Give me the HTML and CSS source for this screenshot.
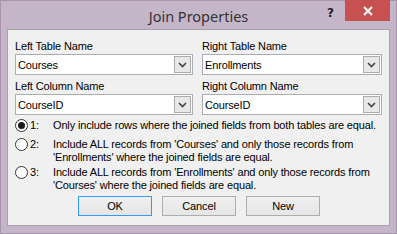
FILE: index.html
```html
<!DOCTYPE html>
<html>
<head>
<meta charset="utf-8">
<link rel="stylesheet" href="styles.css">
</head>
<body>
<div class="window">
  <div class="titlebar">
    <div></div>
    <div class="title">Join Properties</div>
    <div class="controls">
      <span class="help">?</span>
      <span class="close">
        <svg width="10" height="10" viewBox="0 0 10 10"><path d="M1 1 L9 9 M9 1 L1 9" stroke="#fff" stroke-width="2"/></svg>
      </span>
    </div>
  </div>
  <div class="panel">
    <div class="fields">
      <div class="field">
        <div class="label">Left Table Name</div>
        <div class="combo"><span class="value">Courses</span><span class="drop"><svg width="9" height="6" viewBox="0 0 9 6"><path d="M1 1 L4.5 4.5 L8 1" stroke="#444" stroke-width="1.6" fill="none"/></svg></span></div>
      </div>
      <div class="field">
        <div class="label">Right Table Name</div>
        <div class="combo"><span class="value">Enrollments</span><span class="drop"><svg width="9" height="6" viewBox="0 0 9 6"><path d="M1 1 L4.5 4.5 L8 1" stroke="#444" stroke-width="1.6" fill="none"/></svg></span></div>
      </div>
      <div class="field">
        <div class="label">Left Column Name</div>
        <div class="combo"><span class="value">CourseID</span><span class="drop"><svg width="9" height="6" viewBox="0 0 9 6"><path d="M1 1 L4.5 4.5 L8 1" stroke="#444" stroke-width="1.6" fill="none"/></svg></span></div>
      </div>
      <div class="field">
        <div class="label">Right Column Name</div>
        <div class="combo"><span class="value">CourseID</span><span class="drop"><svg width="9" height="6" viewBox="0 0 9 6"><path d="M1 1 L4.5 4.5 L8 1" stroke="#444" stroke-width="1.6" fill="none"/></svg></span></div>
      </div>
    </div>
    <div class="options">
      <div class="option first">
        <span class="radio checked"></span>
        <span class="num">1:</span>
        <span class="text">Only include rows where the joined fields from both tables are equal.</span>
      </div>
      <div class="option second">
        <span class="radio"></span>
        <span class="num">2:</span>
        <span class="text">Include ALL records from 'Courses' and only those records from<br>'Enrollments' where the joined fields are equal.</span>
      </div>
      <div class="option">
        <span class="radio"></span>
        <span class="num">3:</span>
        <span class="text">Include ALL records from 'Enrollments' and only those records from<br>'Courses' where the joined fields are equal.</span>
      </div>
    </div>
    <div class="buttons">
      <button class="btn default">OK</button>
      <button class="btn">Cancel</button>
      <button class="btn">New</button>
    </div>
  </div>
</div>
</body>
</html>
```
FILE: styles.css
```css
html, body {
  margin: 0;
  padding: 0;
}
body {
  width: 397px;
  height: 234px;
  overflow: hidden;
  font-family: "Liberation Sans", Arial, sans-serif;
  font-size: 11px;
  letter-spacing: -0.15px;
  color: #000;
}
.window {
  box-sizing: border-box;
  width: 397px;
  height: 234px;
  background: #c5b5c9;
  border: 1px solid #a796ab;
  display: flex;
  flex-direction: column;
}
.titlebar {
  height: 28px;
  display: grid;
  grid-template-columns: 1fr auto 1fr;
  align-items: start;
  letter-spacing: 0;
}
.title {
  font-family: "Noto Sans", "Open Sans", sans-serif;
  font-size: 14.5px;
  color: #333;
  line-height: 28px;
  padding-top: 1px;
}
.controls {
  display: flex;
  justify-content: flex-end;
  align-items: flex-start;
  margin-top: -1px;
  margin-right: 6px;
}
.help {
  font-family: "DejaVu Sans", sans-serif;
  font-weight: bold;
  font-size: 12px;
  color: #222;
  line-height: 12px;
  margin-top: 7px;
  margin-right: 11px;
}
.close {
  width: 45px;
  height: 21px;
  background: #c75050;
  display: flex;
  align-items: center;
  justify-content: center;
}
.panel {
  flex: 1;
  margin: 0 6px 7px 6px;
  background: #f0f0f0;
  border: 1px solid #a9a0ab;
  padding: 9px 7px 0 7px;
  display: flex;
  flex-direction: column;
}
.fields {
  display: grid;
  grid-template-columns: 178px 180px;
  column-gap: 9px;
  row-gap: 4px;
}
.label {
  line-height: 14px;
  margin-bottom: 1px;
  white-space: nowrap;
}
.combo {
  box-sizing: border-box;
  height: 21px;
  border: 1px solid #abadb3;
  background: #fff;
  display: flex;
  align-items: center;
  justify-content: space-between;
  padding: 0 1px 0 2px;
}
.drop {
  box-sizing: border-box;
  width: 17px;
  height: 17px;
  border: 1px solid #acacac;
  background: #e8e8e8;
  display: flex;
  align-items: center;
  justify-content: center;
}
.options {
  margin-top: 4px;
  display: flex;
  flex-direction: column;
}
.option {
  display: flex;
  align-items: flex-start;
  line-height: 13px;
  white-space: nowrap;
}
.option.first {
  margin-bottom: 6px;
}
.option.second {
  margin-bottom: 2px;
}
.radio {
  box-sizing: border-box;
  width: 13px;
  height: 13px;
  border: 1px solid #333;
  border-radius: 50%;
  background: #fff;
  flex: none;
  display: flex;
  align-items: center;
  justify-content: center;
}
.radio.checked::after {
  content: "";
  width: 7px;
  height: 7px;
  border-radius: 50%;
  background: #1a1a1a;
}
.num {
  width: 23px;
  margin-left: 2px;
  flex: none;
}
.buttons {
  margin-top: 4px;
  display: flex;
  justify-content: flex-start;
  gap: 10px;
  padding-left: 63px;
}
.btn {
  box-sizing: border-box;
  width: 74px;
  height: 20px;
  border: 1px solid #adadad;
  background: linear-gradient(#f0f0f0, #e5e5e5);
  font-family: "Liberation Sans", Arial, sans-serif;
  font-size: 11px;
  letter-spacing: -0.15px;
  color: #000;
  padding: 0;
}
.btn.default {
  border-color: #3399ff;
}
```
